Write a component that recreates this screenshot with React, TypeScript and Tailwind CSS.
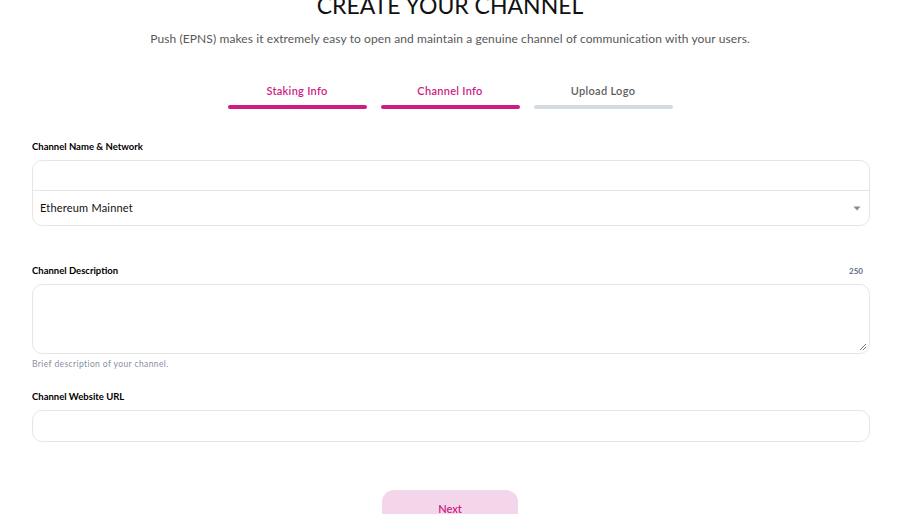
import React from "react";

export default function App() {
  return (
    <div className="w-[900px] h-[514px] overflow-hidden bg-white text-black" style={{ fontFamily: "Lato, 'Open Sans', sans-serif" }}>
      <div className="flex flex-col items-center">
        <h1 className="mt-[-9px] text-[23px] leading-[28px] font-normal tracking-[0px] text-[#111]">CREATE YOUR CHANNEL</h1>
        <p className="mt-[12px] text-[12px] leading-[16px] tracking-[0.1px] text-[#575757]">
          Push (EPNS) makes it extremely easy to open and maintain a genuine channel of communication with your users.
        </p>
        <div className="mt-[37px] flex gap-[14px]">
          <div className="flex w-[139px] flex-col items-center">
            <span className="text-[11px] leading-[14px] font-semibold tracking-[0.3px] text-[#cf1c84]">Staking Info</span>
            <div className="mt-[7px] h-[4px] w-full rounded-full bg-[#cf1c84]" />
          </div>
          <div className="flex w-[139px] flex-col items-center">
            <span className="text-[11px] leading-[14px] font-semibold tracking-[0.3px] text-[#cf1c84]">Channel Info</span>
            <div className="mt-[7px] h-[4px] w-full rounded-full bg-[#cf1c84]" />
          </div>
          <div className="flex w-[139px] flex-col items-center">
            <span className="text-[11px] leading-[14px] font-semibold tracking-[0.3px] text-[#5f5f5f]">Upload Logo</span>
            <div className="mt-[7px] h-[4px] w-full rounded-full bg-[#d3dae2]" />
          </div>
        </div>
      </div>

      <div className="mt-[32px] pl-[32px] pr-[30px]">
        <div className="text-[9.5px] leading-[12px] font-bold text-black">Channel Name &amp; Network</div>
        <div className="mt-[7px] rounded-[10px] border border-[#e6e6e6]">
          <div className="h-[30px] border-b border-[#e6e6e6]" />
          <div className="flex h-[34px] items-center justify-between pl-[7px] pr-[8px]">
            <span className="text-[11px] text-[#111] tracking-[0.2px]">Ethereum Mainnet</span>
            <svg width="8" height="5" viewBox="0 0 8 5"><path d="M0.5 0.5 L7.5 0.5 L4 4.5 Z" fill="#8a8a8a" /></svg>
          </div>
        </div>

        <div className="mt-[39px] flex items-center justify-between pr-[7px]">
          <span className="text-[9.5px] leading-[12px] font-bold text-black">Channel Description</span>
          <span className="text-[8px] leading-[12px] font-bold text-[#5b6b86]">250</span>
        </div>
        <div className="relative mt-[7px] h-[70px] rounded-[10px] border border-[#e6e6e6]">
          <svg className="absolute bottom-[2px] right-[2px]" width="8" height="8" viewBox="0 0 8 8">
            <path d="M7 1 L1 7 M7 4 L4 7" stroke="#777" strokeWidth="1" />
          </svg>
        </div>
        <div className="mt-[4px] text-[8.5px] leading-[12px] tracking-[0.4px] text-[#8a8fa3]">Brief description of your channel.</div>

        <div className="mt-[21px] text-[9.5px] leading-[12px] font-bold text-black">Channel Website URL</div>
        <div className="mt-[7px] h-[32px] rounded-[10px] border border-[#e6e6e6]" />
      </div>

      <div className="mt-[48px] flex justify-center">
        <button className="flex h-[40px] w-[136px] items-start justify-center rounded-[12px] bg-[#f3d6ea] pt-[12px] text-[11px] leading-[14px] font-semibold text-[#cf1c84]">
          Next
        </button>
      </div>
    </div>
  );
}
